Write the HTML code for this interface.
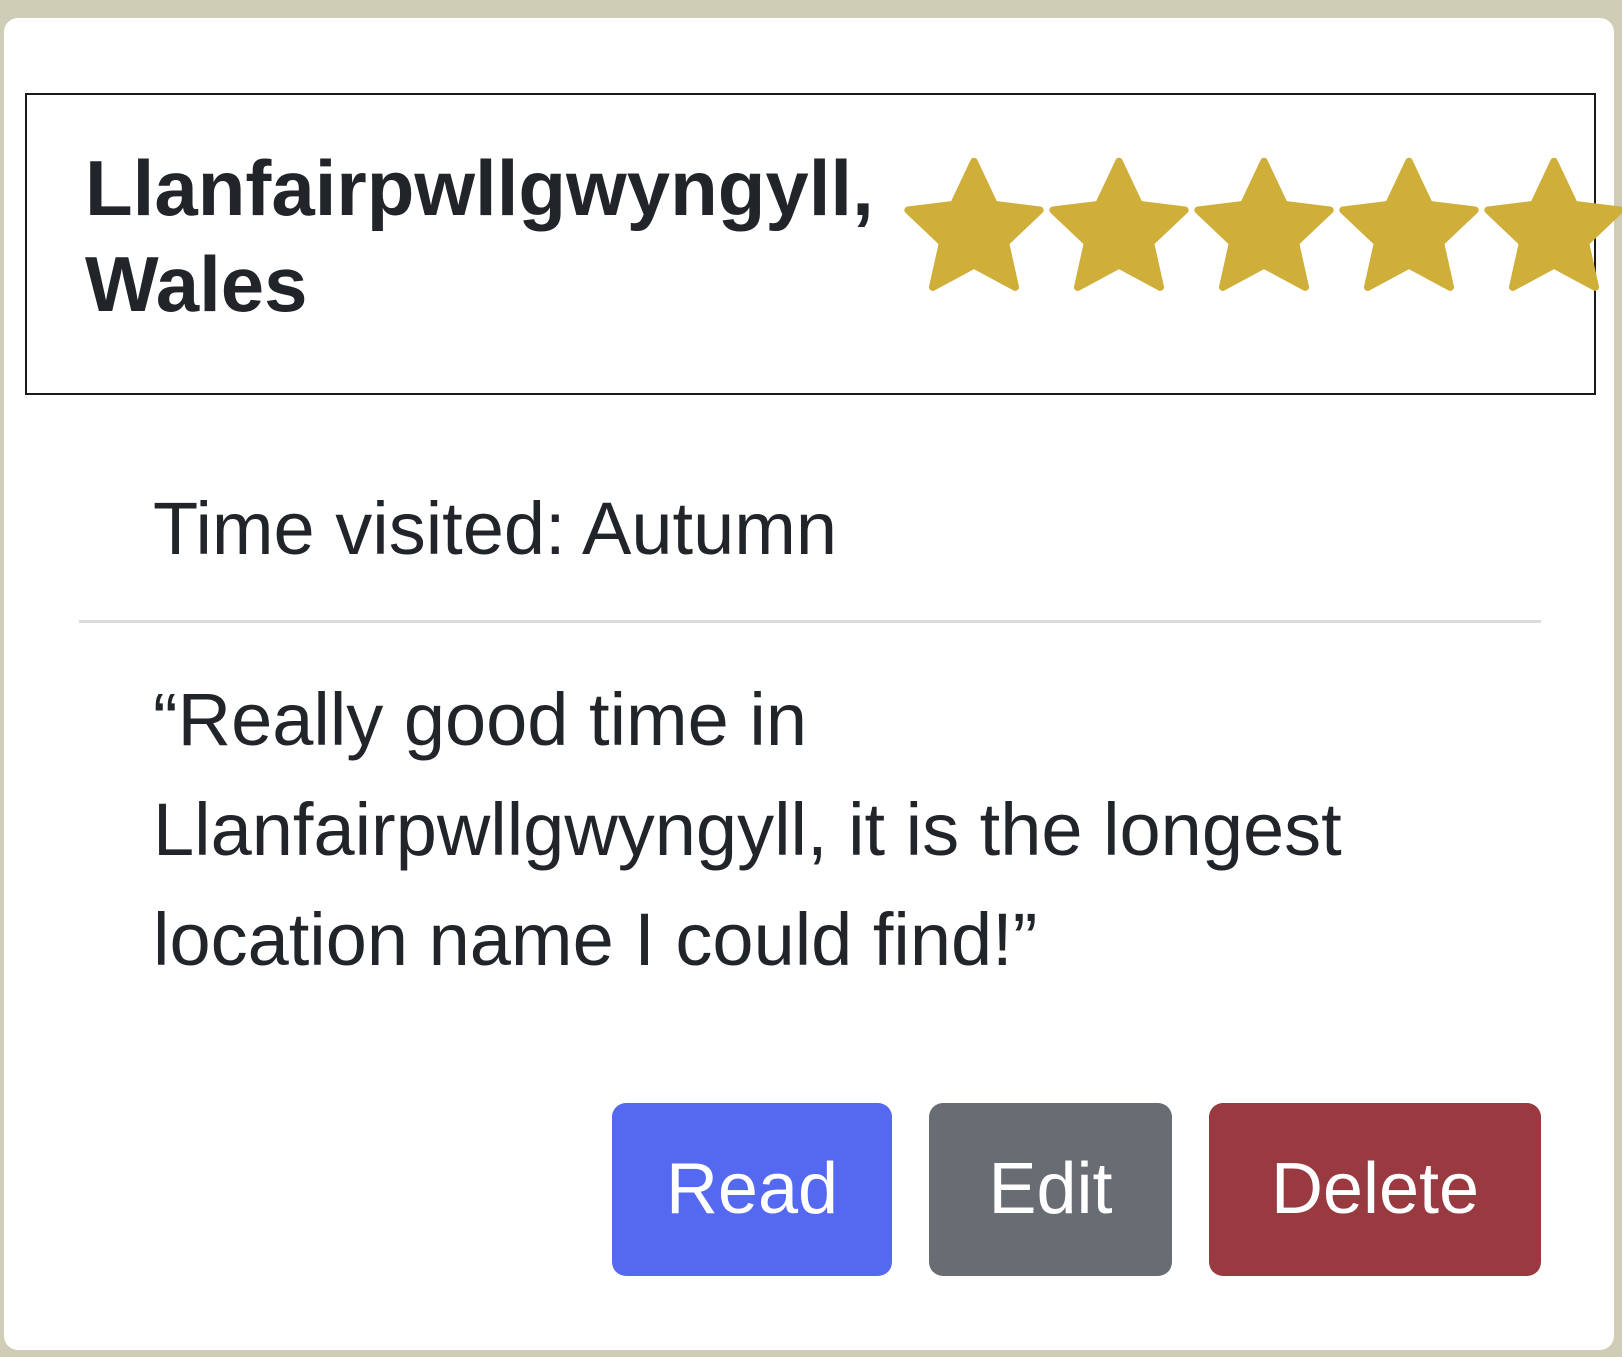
<!DOCTYPE html>
<html><head><style>
html,body{margin:0;padding:0;}
body{width:1622px;height:1357px;background:#d0cdb6;position:relative;overflow:hidden;font-family:"Liberation Sans",sans-serif;color:#212529;}
.card{position:absolute;left:4px;top:18px;width:1610px;height:1332px;background:#fff;border-radius:14px;}
.hdr{position:absolute;left:25px;top:93px;width:1567px;height:298px;border:2px solid #1a1a1a;}
.title{position:absolute;left:85px;top:140px;font-weight:bold;font-size:78px;line-height:96px;letter-spacing:0px;}
.star{position:absolute;top:154px;width:148px;height:148px;}
.t{position:absolute;left:153px;font-size:74px;white-space:nowrap;}
.hr{position:absolute;left:79px;top:620px;width:1462px;height:3px;background:#dcdcdc;}
.btn{position:absolute;top:1103px;height:173px;border-radius:14px;color:#fff;font-size:72px;text-align:center;line-height:173px;}
</style></head><body>
<div class="card"></div>
<div class="hdr"></div>
<div class="title">Llanfairpwllgwyngyll,<br>Wales</div>
<svg class="star" style="left:900px" viewBox="0 0 24 24"><path fill="#cfae3a" stroke="#cfae3a" stroke-width="1.2" stroke-linejoin="round" d="M12 1.2l3.3 7 7.4.9-5.6 5.3 1.6 7.2L12 18l-6.7 3.6 1.6-7.2L1.3 9.1l7.4-.9z"/></svg>
<svg class="star" style="left:1045px" viewBox="0 0 24 24"><path fill="#cfae3a" stroke="#cfae3a" stroke-width="1.2" stroke-linejoin="round" d="M12 1.2l3.3 7 7.4.9-5.6 5.3 1.6 7.2L12 18l-6.7 3.6 1.6-7.2L1.3 9.1l7.4-.9z"/></svg>
<svg class="star" style="left:1190px" viewBox="0 0 24 24"><path fill="#cfae3a" stroke="#cfae3a" stroke-width="1.2" stroke-linejoin="round" d="M12 1.2l3.3 7 7.4.9-5.6 5.3 1.6 7.2L12 18l-6.7 3.6 1.6-7.2L1.3 9.1l7.4-.9z"/></svg>
<svg class="star" style="left:1335px" viewBox="0 0 24 24"><path fill="#cfae3a" stroke="#cfae3a" stroke-width="1.2" stroke-linejoin="round" d="M12 1.2l3.3 7 7.4.9-5.6 5.3 1.6 7.2L12 18l-6.7 3.6 1.6-7.2L1.3 9.1l7.4-.9z"/></svg>
<svg class="star" style="left:1480px" viewBox="0 0 24 24"><path fill="#cfae3a" stroke="#cfae3a" stroke-width="1.2" stroke-linejoin="round" d="M12 1.2l3.3 7 7.4.9-5.6 5.3 1.6 7.2L12 18l-6.7 3.6 1.6-7.2L1.3 9.1l7.4-.9z"/></svg>
<div class="t" style="top:486px">Time visited: Autumn</div>
<div class="hr"></div>
<div class="t" style="top:665px;line-height:110px;white-space:normal;width:1350px">“Really good time in<br>Llanfairpwllgwyngyll, it is the longest<br>location name I could find!”</div>
<div class="btn" style="left:612px;width:280px;background:#5469f0">Read</div>
<div class="btn" style="left:929px;width:243px;background:#686c73">Edit</div>
<div class="btn" style="left:1209px;width:332px;background:#983a40">Delete</div>
</body></html>
